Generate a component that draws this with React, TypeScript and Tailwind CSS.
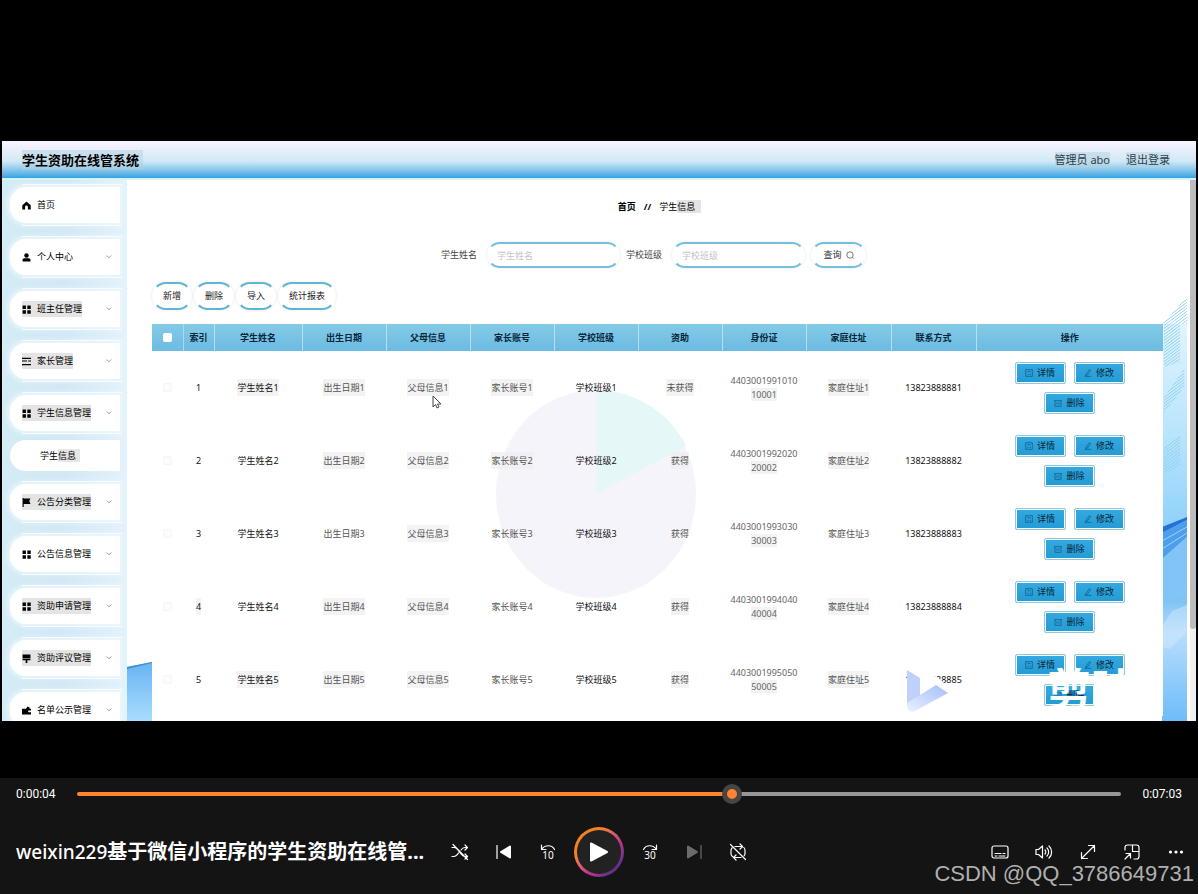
import React, { useState } from "react";

type IconName = "home" | "user" | "grid" | "list" | "flag" | "brush" | "wallet";

const ICONS: Record<IconName, React.ReactNode> = {
  home: <path d="M8 1 0.5 7.5V15H5.5V10.5a2.5 2.5 0 0 1 5 0V15h5V7.5z" />,
  user: (
    <>
      <circle cx="8" cy="4.5" r="4" />
      <path d="M1 15v-2.500c0-2 1.500-2.800 3-3h8c1.500.2 3 1 3 3V15z" />
    </>
  ),
  grid: <path d="M1 1h6v6H1zM9.500 1h6v6h-6zM1 9.500h6v6H1zM9.500 9.500h6v6h-6z" />,
  list: <path d="M0 1.500h16v2H0zM0 6h9v2H0zM11 6h5v2h-5zM0 12.500h16v2H0z" />,
  flag: <path d="M1 0h2v1h12l-2 4.500 2 5H3V16H1z" />,
  brush: <path d="M1 1h14v6H1zM1 8h14v3H9.500v5h-3v-5H1z" />,
  wallet: <path d="M0 5h7l3-4 4 2-1 2h3v3h-5v3h5v4H0z" />,
};

const MENU: { label: string; icon: IconName; mark?: boolean; child?: string }[] = [
  { label: "首页", icon: "home" },
  { label: "个人中心", icon: "user" },
  { label: "班主任管理", icon: "grid", mark: true },
  { label: "家长管理", icon: "list", mark: true },
  { label: "学生信息管理", icon: "grid", mark: true, child: "学生信息" },
  { label: "公告分类管理", icon: "flag", mark: true },
  { label: "公告信息管理", icon: "grid" },
  { label: "资助申请管理", icon: "grid", mark: true },
  { label: "资助评议管理", icon: "brush", mark: true },
  { label: "名单公示管理", icon: "wallet" },
];

const HEADERS = [
  "学生姓名",
  "出生日期",
  "父母信息",
  "家长账号",
  "学校班级",
  "资助",
  "身份证",
  "家庭住址",
  "联系方式",
  "操作",
];

const STUDENTS = [
  { id: 1, aid: "未获得", card: ["4403001991010", "10001"], phone: "13823888881" },
  { id: 2, aid: "获得", card: ["4403001992020", "20002"], phone: "13823888882" },
  { id: 3, aid: "获得", card: ["4403001993030", "30003"], phone: "13823888883" },
  { id: 4, aid: "获得", card: ["4403001994040", "40004"], phone: "13823888884" },
  { id: 5, aid: "获得", card: ["4403001995050", "50005"], phone: "13823888885" },
];

const Sidebar = () => (
  <aside className="w-[125px] shrink-0 bg-linear-to-r from-[#d3ecf5] via-[#d2e8f5] to-[#e4f2fc] pt-1">
    <ul>
      {MENU.map((item) => (
        <li key={item.label} className="mb-2.5">
          <div className="mr-[5px] ml-5 border-y border-white py-0.5">
            <button className="-ml-3 flex h-9 w-[110px] items-center rounded-l-2xl bg-white pl-3 text-black shadow-[0_0_5px_2px_#eef8fd]">
              <span
                className={
                  item.mark
                    ? "flex items-center gap-1.5 bg-[#e4e4e4] py-0.5"
                    : "flex items-center gap-1.5 py-0.5"
                }
              >
                <svg viewBox="0 0 16 16" className="h-[9px] w-[9px] shrink-0" fill="currentColor">
                  {ICONS[item.icon]}
                </svg>
                <span className="text-[9px] leading-3 whitespace-nowrap">{item.label}</span>
              </span>
              {item.icon !== "home" && (
                <svg
                  viewBox="0 0 8 8"
                  className="mr-2 ml-auto h-1.5 w-1.5 shrink-0"
                  fill="none"
                  stroke="#777"
                >
                  <path d="m1 2 3 3 3-3" />
                </svg>
              )}
            </button>
          </div>
          {item.child && (
            <a
              href="#students"
              className="mt-1.5 mr-[7px] ml-2 flex h-[31px] items-center rounded-l-2xl bg-white pl-[30px] text-[9px] text-black"
            >
              <span>学生</span>
              <span className="bg-[#e6e6e6] pr-1">{item.child.slice(2)}</span>
            </a>
          )}
        </li>
      ))}
    </ul>
  </aside>
);

const PillButton = ({ children }: { children: React.ReactNode }) => (
  <button className="flex h-full items-center rounded-full border-2 border-x-transparent border-y-[#62b4d6] bg-white px-[9px] text-[9px] text-[#222] shadow-[0_0_3px_#e4e4e4]">
    {children}
  </button>
);

const SearchField = ({ label, id }: { label: string; id: string }) => (
  <>
    <label htmlFor={id} className="w-[38px] text-[9px] text-[#444]">
      {label}
    </label>
    <input
      id={id}
      placeholder={label}
      className="mr-1.5 ml-2 h-full w-[133px] rounded-full border-2 border-x-transparent border-y-[#74bfe0] bg-white px-2 text-[9px] shadow-[0_0_3px_#e4e4e4] placeholder:text-[#c4c4c4]"
    />
  </>
);

const ActionButton = ({ label, children }: { label: string; children: React.ReactNode }) => (
  <button className="flex h-[22px] w-[51px] items-center justify-center gap-1 rounded-xs border border-[#8cc9e4] bg-linear-to-b from-[#35a9e0] to-[#239bd4] text-[9px] text-[#06263a] shadow-[inset_0_0_0_1px_#ffffff]">
    <svg viewBox="0 0 12 12" className="h-2 w-2" fill="none" stroke="#0b557c">
      {children}
    </svg>
    {label}
  </button>
);

const Cell = ({ mark, dark, children }: { mark?: boolean; dark?: boolean; children: React.ReactNode }) => (
  <td className={dark ? "text-[#111]" : "text-[#555]"}>
    <span className={mark ? "bg-[#eeeeee]/70 py-0.5" : ""}>{children}</span>
  </td>
);

const StudentTable = () => (
  <table className="relative w-full table-fixed text-center text-[9px]">
    <colgroup>
      <col className="w-[31px]" />
      <col className="w-[31px]" />
      <col className="w-[88px]" />
      {HEADERS.slice(1, 7).map((h) => (
        <col key={h} className="w-[84px]" />
      ))}
      <col className="w-[85px]" />
      <col className="w-[85px]" />
      <col />
    </colgroup>
    <thead>
      <tr className="h-[27px] bg-linear-to-b from-[#84cae6] to-[#6cbbe3] text-[#06263a]">
        <th>
          <input
            type="checkbox"
            aria-label="全选"
            className="mx-auto block h-[9px] w-[9px] appearance-none rounded-xs bg-white"
          />
        </th>
        <th className="border-l border-[#a9daf0] font-bold">索引</th>
        {HEADERS.map((h) => (
          <th key={h} className="border-l border-[#b5e0f3] font-bold">
            {h}
          </th>
        ))}
      </tr>
    </thead>
    <tbody>
      {STUDENTS.map((s) => (
        <tr key={s.id} className="h-[73px]">
          <td>
            <input
              type="checkbox"
              aria-label={s.card[1]}
              className="mx-auto block h-[9px] w-[9px] appearance-none rounded-xs border border-[#f5f5f5] bg-[#fcfcfc]"
            />
          </td>
          <Cell dark mark={s.id === 4}>{s.id}</Cell>
          <Cell dark mark={s.id % 4 === 1}>学生姓名{s.id}</Cell>
          <Cell mark={s.id !== 3}>出生日期{s.id}</Cell>
          <Cell mark>父母信息{s.id}</Cell>
          <Cell mark={s.id < 3}>家长账号{s.id}</Cell>
          <Cell dark>学校班级{s.id}</Cell>
          <Cell mark={s.id !== 3}>{s.aid}</Cell>
          <td className="leading-[14px] text-[#666]">
            {s.card[0]}
            <br />
            <span className="bg-[#f2f2f2]">{s.card[1]}</span>
          </td>
          <Cell mark={s.id !== 3}>家庭住址{s.id}</Cell>
          <Cell dark>{s.phone}</Cell>
          <td>
            <div className="mx-auto flex w-[112px] flex-wrap justify-center gap-2">
              <ActionButton label="详情">
                <path d="M1 1h10v10H1zM3.500 4h5M3.500 8h2M7 8h2" />
              </ActionButton>
              <ActionButton label="修改">
                <path d="M3 8 8 1l2 1.500L5 9l-2.500 1zM1 11h10" />
              </ActionButton>
              <ActionButton label="删除">
                <path d="M0 2.500h12M1.500 2.500V11h9V2.500M4.500 5v3.500M7.500 5v3.500" />
              </ActionButton>
            </div>
          </td>
        </tr>
      ))}
    </tbody>
  </table>
);

/* decorative background of the admin pages */
const Backdrop = () => (
  <>
    <svg viewBox="0 0 25 62" className="absolute bottom-0 left-0 h-[62px] w-[25px]">
      <defs>
        <linearGradient id="leftFade" x1="0" y1="0" x2="0" y2="1">
          <stop offset="0" stopColor="#68b4f4" />
          <stop offset="1" stopColor="#a9dcfd" />
        </linearGradient>
      </defs>
      <path d="M0 8 25 3v59H0z" fill="url(#leftFade)" />
      <path d="M0 8 25 3v1L0 10z" fill="#3f8fc8" />
    </svg>
    <svg viewBox="0 0 25 424" className="absolute right-[3px] bottom-0 h-[424px] w-[25px]">
      <defs>
        <linearGradient id="rightFade" x1="0" y1="0" x2="0" y2="1">
          <stop offset="0" stopColor="#e0f4fe" />
          <stop offset="0.3" stopColor="#b5e3fc" />
          <stop offset="0.53" stopColor="#8cd0fa" />
          <stop offset="0.7" stopColor="#7fc4f6" />
          <stop offset="0.78" stopColor="#b9ddfb" />
          <stop offset="1" stopColor="#6dbcfa" />
        </linearGradient>
        <pattern id="hatch" width="4" height="3" patternUnits="userSpaceOnUse">
          <path d="M0 3 4 0" stroke="#8fd0f0" strokeWidth="1" />
        </pattern>
      </defs>
      <path d="M25 0 0 27h25z" fill="url(#hatch)" />
      <path d="M0 27h25v397H0z" fill="url(#rightFade)" />
      <path d="M2 27h16v38l-16 5zM2 100 22 72v18L2 116zM2 150l16-12v30L2 178z" fill="url(#hatch)" />
      <path d="M0 230 25 220v3L0 236z" fill="#2272d8" />
      <path d="M0 236 25 223v17L0 262z" fill="#4d9fec" />
      <path d="M0 244 25 230M0 252 25 236" stroke="#9bd2fb" />
      <path d="M0 262 25 240v52l-25 6z" fill="#83c4f8" />
      <path d="M0 330 10 314l15-6v26L8 352 0 350z" fill="#cfe8fd" opacity="0.5" />
    </svg>
  </>
);

const VideoFrame = () => (
  <div className="relative mx-0.5 flex aspect-[597/290] flex-col overflow-hidden bg-white">
    <header className="flex h-[37px] shrink-0 items-center bg-linear-to-b from-[#f7f3ff] from-5% via-[#cfe9f5] via-55% to-[#2fa3e0] px-5">
      <h1 className="bg-[#b4cfdd]/50 pr-1 text-[13px] leading-5 font-bold text-black">
        学生资助在线管系统
      </h1>
      <div className="mr-1.5 ml-auto flex gap-4 text-[11px] leading-4 text-[#2c3e4c]">
        <span className="bg-[#b4cfdd]/50">管理员 abo</span>
        <button className="bg-[#b4cfdd]/40">退出登录</button>
      </div>
    </header>
    <div className="h-0.5 shrink-0 bg-[#d5f3fc]" />
    <div className="flex min-h-0 flex-1">
      <Sidebar />
      <main id="students" className="relative min-w-0 flex-1 pt-5 pr-[27px] pl-[25px]">
        <Backdrop />
        <nav className="flex justify-center gap-2 pl-1 text-[9px] leading-[14px] text-black">
          <a href="#home" className="font-bold">
            首页
          </a>
          <span className="font-bold">//</span>
          <span>
            学生<span className="bg-[#e4e4e4] pr-1.5">信息</span>
          </span>
        </nav>
        <form className="mt-7 flex h-[26px] items-center justify-center pr-2">
          <SearchField label="学生姓名" id="student-name" />
          <SearchField label="学校班级" id="school-class" />
          <button
            type="button"
            className="flex h-full w-[55px] items-center justify-center gap-1 rounded-full border-2 border-x-transparent border-y-[#74bfe0] bg-white text-[9px] text-[#333] shadow-[0_0_3px_#e4e4e4]"
          >
            查询
            <svg viewBox="0 0 10 10" className="h-2 w-2" fill="none" stroke="#555">
              <circle cx="5" cy="5" r="4" />
              <path d="M8 8l1.500 1.500" />
            </svg>
          </button>
        </form>
        <div className="mt-3.5 flex h-7 gap-0.5">
          <PillButton>新增</PillButton>
          <PillButton>删除</PillButton>
          <PillButton>导入</PillButton>
          <PillButton>统计报表</PillButton>
        </div>
        <div className="relative mt-3.5 bg-white">
          {/* faded pie chart left from the statistics dialog */}
          <svg viewBox="0 0 200 208" className="absolute top-[66px] left-[34%] h-[208px] w-[200px]">
            <ellipse cx="100" cy="104" rx="100" ry="104" fill="#f5f4fa" />
            <path d="M100 104V0c40 0 75 24 90 56z" fill="#e6f7f8" />
          </svg>
          <StudentTable />
        </div>
      </main>
      <div className="w-1.5 shrink-0 bg-[#f1f1f1]">
        <div className="h-[83%] rounded-b-sm bg-[#bdbdbd]" />
      </div>
    </div>
    {/* mouse pointer */}
    <svg viewBox="0 0 10 14" className="absolute top-[254px] left-[36%] h-[14px] w-[10px]">
      <path d="M1 1v11l2.500-2.500L5 13l2-1-1.500-3H9z" fill="#fff" stroke="#444" />
    </svg>
    {/* editor watermark */}
    <svg viewBox="0 0 42 44" className="absolute right-[247px] bottom-2 h-11 w-[42px]">
      <defs>
        <linearGradient id="markFade" x1="0" y1="1" x2="1" y2="0">
          <stop offset="0" stopColor="#eaf0ff" />
          <stop offset="1" stopColor="#a3befb" />
        </linearGradient>
      </defs>
      <path d="M6 0 30 8 42 18 40 25 12 16z" fill="#fff" />
      <path d="M0 1 13 9v22L0 36z" fill="#bfd1fb" />
      <path d="M0 34 29 16 41 24 8 42c-4 2-8 0-8-7z" fill="url(#markFade)" />
    </svg>
    <span className="absolute right-[61px] bottom-2 text-[44px] leading-[48px] font-bold text-white">
      剪映
    </span>
  </div>
);

const ControlButton = ({ label, children }: { label: string; children: React.ReactNode }) => (
  <button aria-label={label} className="flex h-11 w-11 items-center justify-center text-white">
    <svg
      viewBox="0 0 18 18"
      className="h-[18px] w-[18px]"
      fill="none"
      stroke="currentColor"
      strokeWidth="1.2"
      strokeLinecap="round"
      strokeLinejoin="round"
    >
      {children}
    </svg>
  </button>
);

const PlayerBar = () => {
  const [value, setValue] = useState(63);
  const stop = `${value}%`;

  return (
    <footer className="relative h-[116px] shrink-0 bg-[#141414] text-white">
      <div className="flex h-8 items-center px-4 text-[12px]">
        <span className="w-[61px] font-['Roboto',sans-serif]">0:00:04</span>
        <input
          type="range"
          aria-label="进度"
          value={value}
          onChange={(e) => setValue(Number(e.target.value))}
          className="h-1 min-w-0 flex-1 appearance-none rounded-full [&::-webkit-slider-thumb]:h-5 [&::-webkit-slider-thumb]:w-5 [&::-webkit-slider-thumb]:appearance-none [&::-webkit-slider-thumb]:rounded-full [&::-webkit-slider-thumb]:border-5 [&::-webkit-slider-thumb]:border-[#454545] [&::-webkit-slider-thumb]:bg-[#ff8330]"
          style={{ background: `linear-gradient(to right, #ff8330 ${stop}, #979797 ${stop})` }}
        />
        <span className="w-[61px] text-right font-['Roboto',sans-serif]">0:07:03</span>
      </div>
      <div className="grid h-[84px] grid-cols-[minmax(0,1fr)_auto_minmax(0,1fr)] items-center">
        <h2 className="pl-4 text-[20px] font-bold whitespace-nowrap">
          <span className="text-[19px] font-medium">weixin229</span>
          基于微信小程序的学生资助在线管...
        </h2>
        <div className="flex items-center">
          <ControlButton label="随机播放">
            <path d="M1 4.500h2c5 0 6 9 11 9h2M14 11l2.500 2.500L14 16M1 13.500h2c2 0 3.500-2 4.500-3.500M10 7c1-1.500 2-2.500 4-2.500h2M14 2l2.500 2.500L14 7M2 1.500 16.500 16.500" />
          </ControlButton>
          <ControlButton label="上一个">
            <path d="M2 2.500v13" />
            <path d="M15 3.500v11L6 9z" fill="currentColor" strokeWidth="2" />
          </ControlButton>
          <ControlButton label="后退 10 秒">
            <path d="M2.500 2v4.500H7M2.500 6.500C6 1.500 13 1.500 15.500 6.500" />
            <text x="9" y="16" fontSize="10" textAnchor="middle" fill="currentColor" stroke="none">
              10
            </text>
          </ControlButton>
          <button
            aria-label="播放"
            className="mx-1 h-[50px] w-[50px] rounded-full bg-linear-to-br from-[#f58220] from-30% via-[#c4318f] via-60% to-[#5b2d87] to-85% p-[3px]"
          >
            <span className="flex h-full w-full items-center justify-center rounded-full bg-[#222]">
              <svg viewBox="0 0 20 20" className="h-5 w-5" fill="#fff" stroke="#fff" strokeWidth="2" strokeLinejoin="round">
                <path d="M2 1.500v17L18 10z" />
              </svg>
            </span>
          </button>
          <ControlButton label="前进 30 秒">
            <path d="M15.500 2v4.500H11M15.500 6.500C12 1.500 5 1.500 2.500 6.500" />
            <text x="9" y="16" fontSize="10" textAnchor="middle" fill="currentColor" stroke="none">
              30
            </text>
          </ControlButton>
          <ControlButton label="下一个">
            <path d="M16 2.500v13" stroke="#6b6b6b" />
            <path d="M3 3.500v11L12 9z" fill="#6b6b6b" stroke="#6b6b6b" strokeWidth="2" />
          </ControlButton>
          <ControlButton label="循环关闭">
            <path d="M6 3.500h6a4 4 0 0 1 4 4v3c0 1-.3 1.500-.8 2.200M11 1l2.500 2.500L11 6M12 14.500H6a4 4 0 0 1-4-4v-3c0-1 .3-1.700 1-2.500M7 12l-2.500 2.500L7 17M1.500 1.500l15 15" />
          </ControlButton>
        </div>
        <div className="flex items-center justify-end">
          <ControlButton label="字幕">
            <rect x="1" y="3" width="16" height="12" rx="2" />
            <path d="M4 10.500h6M12 10.500h2M4 13h2M8 13h6" strokeWidth="1" />
          </ControlButton>
          <ControlButton label="音量">
            <path d="M1 6.500h2.500L7.500 3v12l-4-3.500H1zM10 7c1 1 1 3 0 4M12 5c2.200 2 2.200 6 0 8M14 3c3.500 3 3.500 9 0 12" />
          </ControlButton>
          <ControlButton label="全屏">
            <path d="M2.500 15.500l13-13M9.500 2.500h6v6M2.500 9.500v6h6" />
          </ControlButton>
          <ControlButton label="小窗播放">
            <path d="M2 7V4.500a2.500 2.500 0 0 1 2.500-2.500h9A2.500 2.500 0 0 1 16 4.500v9a2.500 2.500 0 0 1-2.500 2.500H11M9.500 2v6.500H16M2 16l5.500-5.500M3 10.500h4.500V15" />
          </ControlButton>
          <ControlButton label="更多">
            <g fill="currentColor" stroke="none">
              <circle cx="3.500" cy="9" r="1.600" />
              <circle cx="9" cy="9" r="1.600" />
              <circle cx="14.500" cy="9" r="1.600" />
            </g>
          </ControlButton>
        </div>
      </div>
      <span className="absolute right-1 bottom-1 font-['Liberation_Sans',sans-serif] text-[22px] leading-8 text-[#b0b0b0]">
        CSDN @QQ_3786649731
      </span>
    </footer>
  );
};

const App = () => {
  return (
    <div className="flex min-h-screen flex-col bg-black font-['Noto_Sans','Noto_Sans_CJK_SC',sans-serif]">
      <div className="flex-1 pt-[141px] pb-[57px]">
        <VideoFrame />
      </div>
      <PlayerBar />
    </div>
  );
};

export default App;
